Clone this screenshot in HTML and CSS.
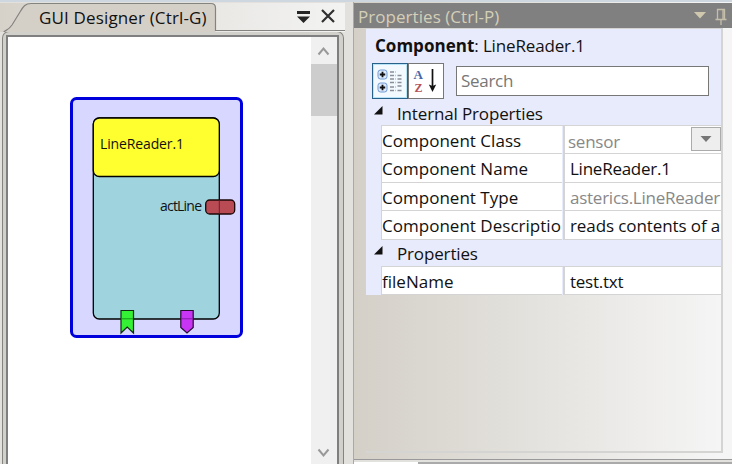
FILE: index.html
```html
<!DOCTYPE html>
<html lang="en">
<head>
<meta charset="utf-8">
<title>GUI Designer</title>
<link rel="stylesheet" href="styles.css">
</head>
<body>
<div class="workspace">
  <section class="designer">
    <header class="tabbar">
      <svg class="tab-shape" width="345" height="32" viewBox="0 0 345 32">
        <defs><linearGradient id="bar"><stop offset="0" stop-color="#d6d2ca"/><stop offset=".62" stop-color="#e9e8e5"/><stop offset="1" stop-color="#f3f3f2"/></linearGradient></defs>
        <path d="M0 3H345V32H0Z" fill="url(#bar)"/>
        <path d="M2 34C4 30 8 31 12 25L20 12C23 7 25 3.500 31 3.500H211Q215.500 3.500 215.500 8V31V34Z" fill="#d4d0c8"/>
        <path d="M2.500 34C4 30 8 31 12 25L20 12C23 7 25 3.500 31 3.500H211Q215.500 3.500 215.500 8V30.500H345" fill="none" stroke="#85837f" stroke-width="1.200"/>
      </svg>
      <span class="tab-title">GUI Designer (Ctrl-G)</span>
      <svg class="tab-icons" width="40" height="16" viewBox="0 0 40 16">
        <path d="M0 3H13V6H0ZM0 8.500H13L6.500 15Z" fill="#252525"/>
        <path d="M25 2L37 14M37 2L25 14" stroke="#303030" stroke-width="2.200"/>
      </svg>
    </header>
    <div class="frame">
      <div class="canvas">
        <svg class="model" width="180" height="246" viewBox="68 95 180 246">
          <rect x="71.500" y="98.500" width="170" height="238" rx="5" fill="#d7d7ff" stroke="#0000dc" stroke-width="3"/>
          <rect x="93.300" y="118" width="126" height="201" rx="6" fill="#9fd4de" stroke="#000" stroke-width="1.300"/>
          <rect x="93.300" y="118" width="126" height="58.500" rx="6" fill="#ffff30" stroke="#000" stroke-width="1.300"/>
          <text class="node-text" x="100" y="149" textLength="84">LineReader.1</text>
          <text class="node-text" x="160" y="211" textLength="42">actLine</text>
          <rect x="205.700" y="200" width="29" height="14" rx="4" fill="#b94b55" stroke="#1c0808" stroke-width="1.300"/>
          <path d="M219.300 200.500V213.500" stroke="#6b2028"/>
          <path d="M121 310.500H133.500V333L127.200 327L121 333Z" fill="#35f135" stroke="#102a10" stroke-width="1.200"/>
          <path d="M121.500 318.800H133" stroke="#159515"/>
          <path d="M180.800 310.500H193.200V327.500L187 333L180.800 327.500Z" fill="#c835f5" stroke="#260a30" stroke-width="1.200"/>
          <path d="M181.500 318.800H192.500" stroke="#831ca5"/>
        </svg>
      </div>
      <div class="scrollbar">
        <svg width="26" height="27" viewBox="0 0 26 27"><path d="M7.500 17.500L12.500 11.500L17.500 17.500" fill="none" stroke="#999" stroke-width="2"/></svg>
        <div class="thumb"></div>
        <svg class="down" width="26" height="27" viewBox="0 0 26 27"><path d="M7.500 12.500L12.500 18.500L17.500 12.500" fill="none" stroke="#999" stroke-width="2"/></svg>
      </div>
    </div>
  </section>
  <section class="properties">
    <header class="prop-head">
      <span class="prop-title">Properties (Ctrl-P)</span>
      <svg width="36" height="18" viewBox="0 0 36 18">
        <path d="M1 5H13L7 11.500Z" fill="#d0c8ae"/>
        <path d="M24.500 12V2.500H31.500V12M22.500 12.500H33.500M28 12.500V18M30 3V12" fill="none" stroke="#c5beaa" stroke-width="1.300"/>
      </svg>
    </header>
    <div class="prop-body">
      <div class="inspector">
        <div class="component-name"><b>Component</b><span>: LineReader.1</span></div>
        <div class="tools">
          <div class="tool selected">
            <svg width="31" height="31" viewBox="0 0 31 31">
              <g fill="#dce9fb" stroke="#6e9ad4"><rect x="4" y="5" width="9" height="9" rx="2.500"/><rect x="4" y="18" width="9" height="9" rx="2.500"/></g>
              <path d="M5.800 9.500H11.200M8.500 6.800V12.200M5.800 22.500H11.200M8.500 19.800V25.200" stroke="#111" stroke-width="1.800"/>
              <path d="M16 7H21.500M16 10.500H21.500M16 14H21.500M16 17.500H21.500M16 22H21.500M16 25.500H21.500M23.500 10.500H28M23.500 14H28M23.500 17.500H28M23.500 21H28M23.500 25.500H28" stroke="#8a8e99" stroke-width="1.300" stroke-dasharray="4 1"/>
            </svg>
          </div>
          <div class="tool">
            <svg width="31" height="31" viewBox="0 0 31 31">
              <text class="sort-letter a" x="3.500" y="14">A</text>
              <text class="sort-letter z" x="4.500" y="26.500">Z</text>
              <path d="M22.500 4V22" stroke="#111" stroke-width="1.700"/><path d="M18.800 19.500L22.500 21L26.200 19.500L22.500 27Z" fill="#111"/>
            </svg>
          </div>
          <div class="search">Search</div>
        </div>
        <div class="group first"><svg width="9" height="9" viewBox="0 0 9 9"><path d="M8.500 0V8.500H0Z" fill="#111"/></svg><span>Internal Properties</span></div>
        <div class="rows">
          <div class="cell name">Component Class</div><div class="cell value muted combo"><span>sensor</span><svg class="drop" width="30" height="24" viewBox="0 0 30 24"><rect x=".5" y=".5" width="29" height="23" fill="#eee" stroke="#ababab"/><path d="M9.500 9H20.500L15 15Z" fill="#777"/></svg></div>
          <div class="cell name">Component Name</div><div class="cell value">LineReader.1</div>
          <div class="cell name">Component Type</div><div class="cell value muted">asterics.LineReader</div>
          <div class="cell name">Component Descriptio</div><div class="cell value reads">reads contents of a</div>
        </div>
        <div class="group second"><svg width="9" height="9" viewBox="0 0 9 9"><path d="M8.500 0V8.500H0Z" fill="#111"/></svg><span>Properties</span></div>
        <div class="rows">
          <div class="cell name">fileName</div><div class="cell value">test.txt</div>
        </div>
      </div>
    </div>
    <footer class="bottom-tabs"><div class="bottom-tab"></div></footer>
  </section>
</div>
</body>
</html>
```

FILE: styles.css
```css
* { box-sizing: border-box; }
body {
  margin: 0;
  width: 732px;
  height: 464px;
  overflow: hidden;
  font-family: "Open Sans", "Noto Sans", sans-serif;
  font-size: 17px;
  color: #111;
  background: #e2e1dd;
}
.workspace {
  display: grid;
  grid-template-columns: 345px 8px 379px;
  height: 464px;
  border-top: 2px solid #ced6df;
}
.designer { display: flex; flex-direction: column; height: 462px; }
.tabbar {
  position: relative;
  display: flex;
  align-items: center;
  height: 29px;
  flex: none;
  padding-left: 39px;
}
.tab-shape { position: absolute; left: 0; top: -2px; }
.tab-title { position: relative; letter-spacing: .15px; line-height: 24px; white-space: nowrap; margin-top: 2px; }
.tab-icons { position: absolute; left: 297px; top: 6px; }
.frame {
  flex: 1;
  display: flex;
  margin: 0 1px 0 2px;
  border: solid #85857f;
  border-width: 1px 1px 0;
  border-radius: 7px 7px 0 0;
  background: #d2d0ca;
  padding: 3px 4px 0 3px;
}
.canvas { flex: 1; background: #fff; border: solid #7f7f7f; border-width: 2px 0 0 2px; padding: 58px 0 0 60px; }
.model { display: block; }
.node-text { font-size: 14px; fill: #111; }
.scrollbar { width: 28px; display: flex; flex-direction: column; background: #f0f0f0; border: solid #7f7f7f; border-width: 2px 2px 0 0; }
.thumb { height: 52px; flex: none; background: #cdcdcd; }
.scrollbar svg { flex: none; }
.down { margin-top: auto; }
.properties { grid-column: 3; display: flex; flex-direction: column; height: 462px; padding-top: 1px; border-left: 1px solid #a9a9a5; background: linear-gradient(90deg, #d4d0c8, #f5f5f5 97%); }
.prop-head { height: 25px; flex: none; background: #808080; display: flex; align-items: center; justify-content: space-between; color: #d4cfb8; padding: 0 3px 0 4px; }
.prop-title { letter-spacing: .05px; margin-top: 1px; }
.prop-body { height: 425px; flex: none; margin: 0 9px 0 12px; border: solid #d4d4d3; border-width: 1px 2px 2px 0; }
.inspector { background: #e8ebfb; height: 266px; }
.component-name { height: 34px; padding: 5px 0 0 9px; line-height: 24px; }
.component-name b { letter-spacing: .02px; }
.component-name span { letter-spacing: -.15px; }
.tools { display: flex; height: 36px; padding-left: 6px; }
.tool { width: 36px; height: 36px; background: #fff; border: 1px solid #777; padding: 1px; }
.tool.selected { border-color: #28628b; box-shadow: inset 0 0 0 1px #b8e4f8; background: #f2faff; }
.sort-letter { font: bold 13px/1 "Liberation Serif", serif; }
.a { fill: #4966a6; }
.z { fill: #b65158; font-size: 12px; }
.search { width: 253px; height: 30px; margin: 3px 0 0 12px; padding-left: 4px; border: 1px solid #777; background: #fff; color: #777; line-height: 28px; letter-spacing: -.3px; }
.group { display: flex; align-items: center; padding-left: 8px; gap: 14px; letter-spacing: -.15px; }
.group svg { margin-top: -6px; }
.group.first { height: 26px; padding-top: 2px; }
.group.second { height: 26px; padding-top: 2px; }
.rows { display: grid; grid-template-columns: 183px 157px; grid-auto-rows: 28.400px; margin-left: 15px; border-top: 1px solid #d4d4d4; }
.cell { background: #fff; border-bottom: 1px solid #d4d4d4; border-left: 1px solid #d4d4d4; line-height: 29px; white-space: nowrap; overflow: hidden; letter-spacing: -.25px; }
.name { margin-right: 2px; letter-spacing: .02px; }
.value { border-left-width: 2px; padding-left: 5px; margin-left: -1px; }
.value.reads { letter-spacing: -.1px; }
.muted { color: #888; }
.value.combo { display: flex; justify-content: space-between; padding-left: 3px; padding-top: 1px; }
.bottom-tabs { flex: 1; margin-top: 6px; border-top: 1px solid #999; padding-top: 2px; background: #e3e1dd; }
.bottom-tab { width: 64px; height: 2px; background: #fff; box-shadow: 320px 0 0 #aaa, 64px 0 0 #aaa, 128px 0 0 #aaa, 192px 0 0 #aaa, 256px 0 0 #aaa; }
```
